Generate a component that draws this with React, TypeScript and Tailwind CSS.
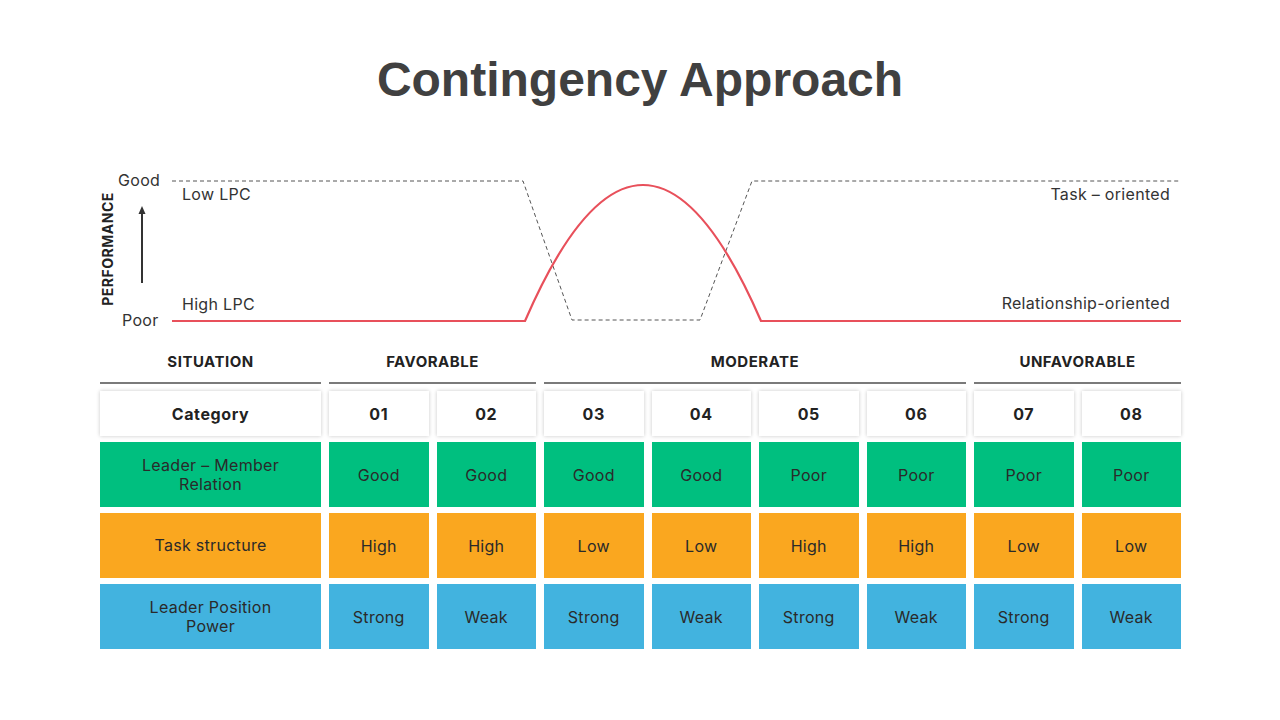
import React from "react";

const font = { fontFamily: "Inter, 'Noto Sans', sans-serif" };

const nums = ["01", "02", "03", "04", "05", "06", "07", "08"];
const rows = [
  {
    label: ["Leader – Member", "Relation"],
    bg: "bg-[#00bf7f]",
    vals: ["Good", "Good", "Good", "Good", "Poor", "Poor", "Poor", "Poor"],
  },
  {
    label: ["Task structure"],
    bg: "bg-[#faa71f]",
    vals: ["High", "High", "Low", "Low", "High", "High", "Low", "Low"],
  },
  {
    label: ["Leader Position", "Power"],
    bg: "bg-[#42b3df]",
    vals: ["Strong", "Weak", "Strong", "Weak", "Strong", "Weak", "Strong", "Weak"],
  },
];

function Chart() {
  return (
    <div className="relative h-[170px] w-full">
      <svg className="absolute inset-0" width="1280" height="170" viewBox="0 0 1280 170">
        <polyline
          points="172,16 523,16 572,155 700,155 752,16 1181,16"
          fill="none"
          stroke="#555"
          strokeWidth="1"
          strokeDasharray="4 3"
        />
        <path
          d="M172 156 L525 156 Q643 -116 761 156 L1181 156"
          fill="none"
          stroke="#e8505b"
          strokeWidth="2.2"
        />
        <line x1="142" y1="118" x2="142" y2="48" stroke="#333" strokeWidth="2" />
        <polygon points="142,41 138.5,49 145.5,49" fill="#333" />
      </svg>
      <div className="absolute left-[118px] top-[5px] text-[16px] leading-5 tracking-[0.3px] text-[#333]">Good</div>
      <div className="absolute left-[122px] top-[145px] text-[16px] leading-5 tracking-[0.3px] text-[#333]">Poor</div>
      <div className="absolute left-[182px] top-[19px] text-[16px] leading-5 tracking-[0.3px] text-[#333]">Low LPC</div>
      <div className="absolute left-[182px] top-[129px] text-[16px] leading-5 tracking-[0.3px] text-[#333]">High LPC</div>
      <div className="absolute right-[110px] top-[19px] text-[16px] leading-5 tracking-[0.3px] text-[#333]">
        Task – oriented
      </div>
      <div className="absolute right-[110px] top-[128px] text-[16px] leading-5 tracking-[0.3px] text-[#333]">
        Relationship-oriented
      </div>
      <div className="absolute left-[107px] top-[84px] h-0 w-0">
        <div className="absolute left-0 top-0 -translate-x-1/2 -translate-y-1/2 -rotate-90 whitespace-nowrap text-[14px] font-bold tracking-[0.5px] text-[#222]">
          PERFORMANCE
        </div>
      </div>
    </div>
  );
}

function GroupHead({ text, span }: { text: string; span: string }) {
  return (
    <div className={`${span} flex flex-col items-center`}>
      <div className="flex h-[22px] items-center text-[15px] font-bold tracking-[0.5px] text-[#222]">{text}</div>
      <div className="mt-[9px] h-[2px] w-full bg-[#7a7a7a]" />
    </div>
  );
}

export default function App() {
  return (
    <div className="h-[720px] w-[1280px] overflow-hidden bg-white" style={font}>
      <div className="flex justify-center pt-[50px]">
        <h1
          className="text-[48px] font-bold leading-[60px] text-[#404040]"
          style={{ fontFamily: "'Liberation Sans', Arial, sans-serif" }}
        >
          Contingency Approach
        </h1>
      </div>
      <div className="mt-[55px]">
        <Chart />
      </div>
      <div className="ml-[100px] mt-[16px] w-[1081px]">
        <div className="grid grid-cols-[221px_repeat(8,1fr)] gap-x-[8px]">
          <GroupHead text="SITUATION" span="col-span-1" />
          <GroupHead text="FAVORABLE" span="col-span-2" />
          <GroupHead text="MODERATE" span="col-span-4" />
          <GroupHead text="UNFAVORABLE" span="col-span-2" />
        </div>
        <div className="mt-[7px] grid grid-cols-[221px_repeat(8,1fr)] gap-x-[8px] gap-y-[6px]">
          <div className="flex h-[45px] items-center justify-center bg-white text-[16px] font-bold tracking-[0.6px] text-[#222] shadow-[0_0_4px_rgba(0,0,0,0.22)]">
            Category
          </div>
          {nums.map((n) => (
            <div
              key={n}
              className="flex h-[45px] items-center justify-center bg-white text-[16px] font-bold tracking-[0.6px] text-[#222] shadow-[0_0_4px_rgba(0,0,0,0.22)]"
            >
              {n}
            </div>
          ))}
          {rows.map((r, i) => (
            <React.Fragment key={i}>
              <div
                className={`${r.bg} flex h-[65px] flex-col items-center justify-center text-[16px] leading-[19px] tracking-[0.3px] text-[#2a2a2a]`}
              >
                {r.label.map((l) => (
                  <div key={l}>{l}</div>
                ))}
              </div>
              {r.vals.map((v, j) => (
                <div
                  key={j}
                  className={`${r.bg} flex h-[65px] items-center justify-center text-[16px] tracking-[0.3px] text-[#2a2a2a]`}
                >
                  {v}
                </div>
              ))}
            </React.Fragment>
          ))}
        </div>
      </div>
    </div>
  );
}
